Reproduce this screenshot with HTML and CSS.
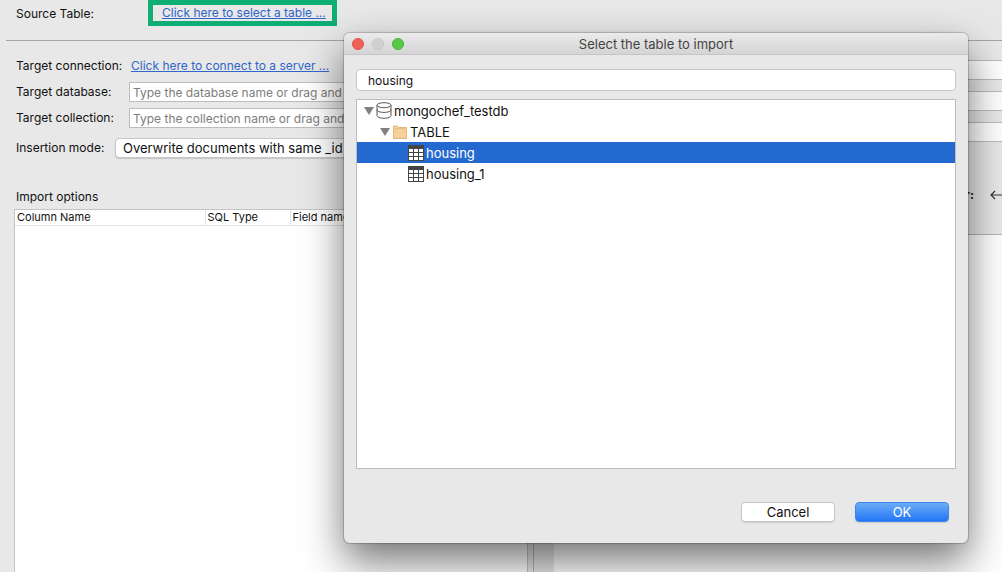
FILE: index.html
```html
<!DOCTYPE html>
<html lang="en">
<head>
    <meta charset="UTF-8">
    <meta name="viewport" content="width=device-width, initial-scale=1.0">
    <title>Select the table to import</title>
    <link rel="stylesheet" href="styles.css">
</head>
<body>
    <main class="import">
        <div class="source">
            <span class="source-label">Source Table:</span>
            <div class="highlight">
                <a href="#">Click here to select a table ...</a>
            </div>
        </div>

        <div class="columns">
            <section class="pane-left">
                <div class="form">
                    <div class="form-row">
                        <span class="label">Target connection:</span>
                        <a href="#">Click here to connect to a server ...</a>
                    </div>
                    <div class="form-row">
                        <label class="label label-field" for="database">Target database:</label>
                        <input class="field" type="text" id="database" placeholder="Type the database name or drag and">
                    </div>
                    <div class="form-row">
                        <label class="label label-field" for="collection">Target collection:</label>
                        <input class="field" type="text" id="collection" placeholder="Type the collection name or drag and">
                    </div>
                    <div class="form-row row-mode">
                        <label class="label label-mode" for="mode">Insertion mode:</label>
                        <select class="mode" id="mode">
                            <option>Overwrite documents with same _id</option>
                        </select>
                    </div>
                </div>
                <h2 class="options-title">Import options</h2>
                <div class="options">
                    <table class="options-table">
                        <thead>
                            <tr>
                                <th class="col-name">Column Name</th>
                                <th class="col-type">SQL Type</th>
                                <th>Field name</th>
                            </tr>
                        </thead>
                    </table>
                </div>
            </section>

            <div class="sash"></div>

            <section class="pane-right">
                <div class="right-fields">
                    <input class="field" type="text" aria-label="Server">
                    <input class="field" type="text" aria-label="Database">
                    <input class="field" type="text" aria-label="Collection">
                </div>
                <div class="toolbar">
                    <strong>r:</strong>
                    <svg width="14" height="10" viewBox="0 0 14 10" fill="none" stroke="#333" stroke-width="1.2">
                        <path d="M5 1 1 5l4 4M1 5h13"/>
                    </svg>
                </div>
                <div class="preview"></div>
            </section>
        </div>
    </main>

    <div class="dialog" role="dialog" aria-labelledby="dialog-title">
        <div class="titlebar">
            <div class="lights">
                <button class="light close" aria-label="Close"></button>
                <button class="light minimize" aria-label="Minimize" disabled></button>
                <button class="light maximize" aria-label="Maximize"></button>
            </div>
            <h1 class="title" id="dialog-title">Select the table to import</h1>
        </div>

        <div class="dialog-body">
            <input class="search" type="text" value="housing" aria-label="Filter tables">

            <ul class="tree">
                <li class="node">
                    <span class="arrow"></span>
                    <svg width="16" height="17" viewBox="0 0 16 17" fill="#fff" stroke="#555" stroke-width="1">
                        <path d="M1 3.200v10.400C1 15 4 16.300 8 16.300s7-1.300 7-2.700V3.200"/>
                        <ellipse cx="8" cy="3.200" rx="7" ry="2.500"/>
                        <path d="M1 7.800c0 1.500 3 2.600 7 2.600s7-1.100 7-2.600" fill="none"/>
                    </svg>
                    <span>mongochef_testdb</span>
                </li>
                <li class="node level-2">
                    <span class="arrow"></span>
                    <svg width="16" height="14" viewBox="0 0 16 14">
                        <path d="M1.500 1h4l1 1.500h8V13.500h-13z" fill="#f6d199" stroke="#e0b878"/>
                        <path d="M1.500 3.500h13" stroke="#e6c084"/>
                    </svg>
                    <span>TABLE</span>
                </li>
                <li class="node level-3 selected">
                    <svg width="16" height="16" viewBox="0 0 16 16">
                        <path d="M0 0h16v16H0z" fill="#444"/>
                        <path d="M1 4h4v3H1zM6 4h4v3H6zM11 4h4v3h-4zM1 8h4v3H1zM6 8h4v3H6zM11 8h4v3h-4zM1 12h4v3H1zM6 12h4v3H6zM11 12h4v3h-4z" fill="#fff"/>
                    </svg>
                    <span>housing</span>
                </li>
                <li class="node level-3">
                    <svg width="16" height="16" viewBox="0 0 16 16">
                        <path d="M0 0h16v16H0z" fill="#444"/>
                        <path d="M1 4h4v3H1zM6 4h4v3H6zM11 4h4v3h-4zM1 8h4v3H1zM6 8h4v3H6zM11 8h4v3h-4zM1 12h4v3H1zM6 12h4v3H6zM11 12h4v3h-4z" fill="#fff"/>
                    </svg>
                    <span>housing_1</span>
                </li>
            </ul>

            <div class="actions">
                <button class="btn">Cancel</button>
                <button class="btn btn-primary">OK</button>
            </div>
        </div>
    </div>
</body>
</html>
```

FILE: styles.css
```css
* {
    box-sizing: border-box;
}
body {
    margin: 0;
    height: 100vh;
    overflow: hidden;
    position: relative;
    background-color: #e8e8e8;
    color: #111;
    font-family: Inter, "Liberation Sans", sans-serif;
    font-size: 12px;
    line-height: 16px;
}
input, select, button {
    font: inherit;
    color: inherit;
}
a {
    color: #2f66c8;
    font-size: 12px;
    text-decoration: underline;
}

/* Background window */
.import {
    display: flex;
    flex-direction: column;
    height: 100%;
}
.source {
    display: flex;
    align-items: flex-start;
    height: 41px;
    margin-left: 6px;
    padding-left: 10px;
    border-bottom: 1px solid #a5a5a5;
}
.source-label {
    width: 132px;
    padding-top: 6px;
}
.highlight {
    width: 189px;
    height: 26px;
    padding: 0 9px;
    border: 5px solid #0fae74;
    line-height: 15px;
    white-space: nowrap;
}
.highlight a {
    display: block;
}
.columns {
    display: flex;
    flex: 1;
}
.pane-left {
    display: flex;
    flex-direction: column;
    flex: 528 1 0;
    min-width: 0;
}
.form {
    padding: 15px 10px 0 16px;
}
.form-row {
    display: flex;
    align-items: center;
    height: 20px;
    margin-bottom: 6px;
}
.form-row .label {
    width: 115px;
    white-space: nowrap;
}
.form-row .label-field {
    width: 113px;
}
.form-row .label-mode {
    width: 99px;
}
.form-row.row-mode {
    margin-top: 10px;
}
.field {
    flex: 1;
    width: 100%;
    height: 20px;
    padding: 0 3px;
    border: 1px solid #bcbcbc;
    background-color: #fff;
}
.field::placeholder {
    color: #7d7d7d;
    opacity: 1;
}
.mode {
    flex: 1;
    height: 20px;
    padding: 0 7px;
    appearance: none;
    border: 1px solid #c8c8c8;
    border-radius: 4px;
    background-color: #fff;
    box-shadow: 0 1px 1px rgba(0, 0, 0, 0.15);
    font-size: 13px;
}
.options-title {
    margin: 25px 0 4px 16px;
    font-size: 12px;
    font-weight: normal;
}
.options {
    flex: 1;
    margin-left: 14px;
    border: 1px solid #c4c4c4;
    border-bottom: none;
    background-color: #fff;
}
.options-table {
    width: 100%;
    border-collapse: collapse;
    table-layout: fixed;
    font-size: 11px;
    line-height: 15px;
}
.options-table th {
    padding: 0 2px;
    border-bottom: 1px solid #e2e2e2;
    border-right: 1px solid #e2e2e2;
    font-weight: normal;
    text-align: left;
}
.options-table .col-name {
    width: 190px;
}
.options-table .col-type {
    width: 85px;
}
.sash {
    width: 6px;
    border-right: 1px solid #b4b4b4;
}
.pane-right {
    display: flex;
    flex-direction: column;
    flex: 468 1 0;
    min-width: 0;
}
.right-fields {
    display: flex;
    flex-direction: column;
    gap: 11px;
    padding: 19px 0 0 20px;
}
.right-fields .field {
    flex: none;
    border-right: none;
}
.toolbar {
    display: flex;
    flex: none;
    align-items: center;
    justify-content: flex-end;
    gap: 16px;
    height: 92px;
    padding-top: 14px;
    overflow: hidden;
}
.toolbar svg {
    margin-right: -2px;
}
.preview {
    flex: 1;
    margin-left: 20px;
    border-top: 1px solid #b4b4b4;
    background-color: #fff;
}

/* Dialog */
.dialog {
    position: absolute;
    top: 33px;
    right: 34px;
    left: 344px;
    display: flex;
    flex-direction: column;
    border-radius: 6px;
    background-color: #e8e8e8;
    box-shadow: 0 0 1px 1px rgba(0, 0, 0, 0.2), 0 18px 40px rgba(0, 0, 0, 0.55);
    font-size: 13px;
}
.titlebar {
    display: grid;
    grid-template-columns: 80px 1fr 80px;
    align-items: center;
    height: 22px;
    border-bottom: 1px solid #c6c6c6;
    border-radius: 6px 6px 0 0;
    background: linear-gradient(#ebebeb, #d4d4d4);
}
.lights {
    display: flex;
    gap: 8px;
    padding-left: 8px;
}
.light {
    width: 12px;
    height: 12px;
    padding: 0;
    border: 1px solid #c9c9c9;
    border-radius: 50%;
    background-color: #d0d0d0;
}
.close {
    border-color: #df5048;
    background-color: #ee6158;
}
.maximize {
    border-color: #45b535;
    background-color: #58c848;
}
.title {
    margin: 0;
    color: #444;
    font-size: 13px;
    font-weight: normal;
    text-align: center;
}
.dialog-body {
    display: flex;
    flex-direction: column;
    padding: 14px 12px 21px;
}
.search {
    height: 22px;
    padding: 0 11px;
    border: 1px solid #c6c6c6;
    border-radius: 4px;
    background-color: #fff;
    font-size: 12px;
}
.tree {
    height: 370px;
    margin: 8px 0 33px;
    padding: 0;
    border: 1px solid #bdbdbd;
    background-color: #fff;
    list-style: none;
}
.node {
    display: flex;
    align-items: center;
    gap: 2px;
    height: 21px;
    padding-left: 7px;
}
.level-2 {
    padding-left: 23px;
}
.level-3 {
    padding-left: 51px;
}
.selected {
    background-color: #2469cf;
    color: #fff;
}
.arrow {
    border: 5px solid transparent;
    border-top: 8px solid #808080;
    border-bottom: none;
}
.actions {
    display: flex;
    justify-content: flex-end;
    gap: 20px;
    padding-right: 7px;
}
.btn {
    width: 94px;
    height: 20px;
    padding: 0;
    border: 1px solid #c8c8c8;
    border-radius: 4px;
    background-color: #fff;
    box-shadow: 0 1px 1px rgba(0, 0, 0, 0.12);
}
.btn-primary {
    border-color: #3f86ec;
    background: linear-gradient(#6bacf8, #2376f4);
    color: #fff;
}
```
